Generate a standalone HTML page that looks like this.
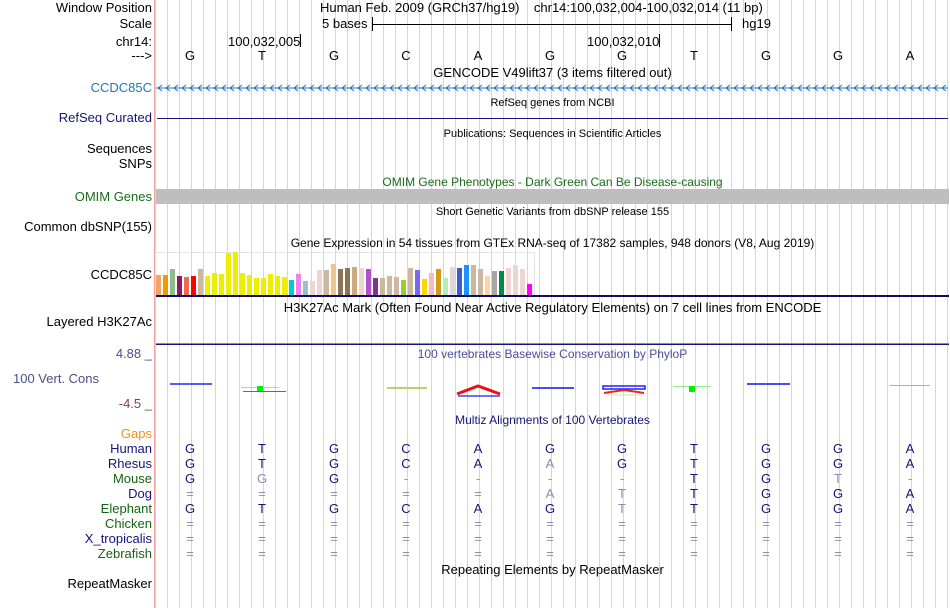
<!DOCTYPE html>
<html><head><meta charset="utf-8"><style>
body{margin:0;width:950px;height:608px;overflow:hidden;background:#fff;font-family:"Liberation Sans",sans-serif;font-size:13px;position:relative}
.a{position:absolute;white-space:nowrap;line-height:16px}
.l{position:absolute;right:798px;text-align:right;white-space:nowrap;line-height:16px}
.c{position:absolute;left:155px;width:795px;text-align:center;white-space:nowrap;line-height:16px}
.s{font-size:11px}
.row{position:absolute;left:154px;width:792px;display:flex;line-height:16px}
.row span{width:72px;text-align:center}
.g{color:#8c8cb4}
</style></head><body>
<div style="position:absolute;left:155px;top:0;width:795px;height:608px;background-image:linear-gradient(to right,#d2d2f2 1px,transparent 1px);background-size:12px 100%"></div>
<div style="position:absolute;left:154px;top:0;width:1px;height:608px;background:#f4a0a0"></div>

<div class="l" style="top:0">Window Position</div>
<div class="a" style="left:320px;top:0">Human Feb. 2009 (GRCh37/hg19) &nbsp;&nbsp; chr14:100,032,004-100,032,014 (11 bp)</div>
<div class="l" style="top:16px">Scale</div>
<div class="a" style="left:322px;top:16px">5 bases</div>
<div style="position:absolute;left:372px;top:24px;width:360px;height:1px;background:#000"></div>
<div style="position:absolute;left:372px;top:17px;width:1px;height:14px;background:#000"></div>
<div style="position:absolute;left:731px;top:17px;width:1px;height:14px;background:#000"></div>
<div class="a" style="left:742px;top:16px">hg19</div>
<div class="l" style="top:34px">chr14:</div>
<div class="a" style="left:228px;top:34px">100,032,005</div>
<div style="position:absolute;left:300px;top:34px;width:1px;height:13px;background:#000"></div>
<div class="a" style="left:587px;top:34px">100,032,010</div>
<div style="position:absolute;left:659px;top:34px;width:1px;height:13px;background:#000"></div>
<div class="l" style="top:48px">---&gt;</div>
<div class="row" style="top:48px"><span>G</span><span>T</span><span>G</span><span>C</span><span>A</span><span>G</span><span>G</span><span>T</span><span>G</span><span>G</span><span>A</span></div>

<div class="c" style="top:65px">GENCODE V49lift37 (3 items filtered out)</div>
<div class="l" style="top:80px;color:#1f77b4">CCDC85C</div>
<svg style="position:absolute;left:156px;top:83px" width="792" height="10"><defs><pattern id="ar" width="8" height="10" patternUnits="userSpaceOnUse"><path d="M6 2 L2 5 L6 8" stroke="#1f6fb4" fill="none" stroke-width="1"/></pattern></defs><line x1="0" y1="5" x2="792" y2="5" stroke="#1f6fb4"/><rect width="792" height="10" fill="url(#ar)"/></svg>

<div class="c s" style="top:95px">RefSeq genes from NCBI</div>
<div class="l" style="top:110px;color:#14147a">RefSeq Curated</div>
<div style="position:absolute;left:157px;top:118px;width:791px;height:1px;background:#14147a"></div>

<div class="c s" style="top:126px">Publications: Sequences in Scientific Articles</div>
<div class="l" style="top:141px">Sequences</div>
<div class="l" style="top:156px">SNPs</div>

<div class="c" style="top:174px;color:#1a6b1a;font-size:12px">OMIM Gene Phenotypes - Dark Green Can Be Disease-causing</div>
<div class="l" style="top:189px;color:#1a6b1a">OMIM Genes</div>
<div style="position:absolute;left:156px;top:189px;width:793px;height:15px;background:#bebebe"></div>

<div class="c s" style="top:204px">Short Genetic Variants from dbSNP release 155</div>
<div class="l" style="top:219px">Common dbSNP(155)</div>

<div class="c" style="top:235px;font-size:12px">Gene Expression in 54 tissues from GTEx RNA-seq of 17382 samples, 948 donors (V8, Aug 2019)</div>
<div class="l" style="top:267px">CCDC85C</div>
<div style="position:absolute;left:155px;top:252px;width:378px;height:43px;border:1px solid #e4e4e4;border-bottom:none"></div>
<svg id="bars" style="position:absolute;left:156px;top:250px" width="380" height="46"></svg>
<div style="position:absolute;left:156px;top:295px;width:793px;height:2px;background:#0d0d66"></div>

<div class="c" style="top:300px">H3K27Ac Mark (Often Found Near Active Regulatory Elements) on 7 cell lines from ENCODE</div>
<div class="l" style="top:314px">Layered H3K27Ac</div>
<div style="position:absolute;left:156px;top:343px;width:793px;height:1px;background:#c08040"></div>
<div style="position:absolute;left:156px;top:344px;width:793px;height:1px;background:#14147a"></div>

<div class="l" style="top:346px;color:#4d4d8a">4.88 _</div>
<div class="c" style="top:346px;color:#4d4d99;font-size:12px">100 vertebrates Basewise Conservation by PhyloP</div>
<div class="a" style="left:13px;top:371px;color:#4d4d8a">100 Vert. Cons</div>
<div class="l" style="top:396px;color:#8a4040">-4.5 _</div>

<div style="position:absolute;left:170px;top:383px;width:42px;height:2px;background:#5a5aee"></div>
<div style="position:absolute;left:241px;top:387px;width:38px;height:1px;background:#90ee90"></div>
<div style="position:absolute;left:257px;top:386px;width:6px;height:5px;background:#00ee00"></div>
<div style="position:absolute;left:243px;top:391px;width:43px;height:1px;background:#5a5aee"></div>
<div style="position:absolute;left:387px;top:387px;width:40px;height:2px;background:#c8c870"></div>
<div style="position:absolute;left:532px;top:387px;width:42px;height:2px;background:#4b4bee"></div>
<svg style="position:absolute;left:455px;top:384px" width="50" height="14"><path d="M2 10 L23 2 L45 10" stroke="#ee1010" stroke-width="3" fill="none"/><line x1="3" y1="12" x2="45" y2="12" stroke="#4040ee" stroke-width="1.5"/></svg>
<svg style="position:absolute;left:602px;top:385px" width="46" height="12"><rect x="1" y="1" width="42" height="3" fill="none" stroke="#2020ee" stroke-width="1.5"/><path d="M2 8 L22 5 L42 8" stroke="#ee2020" stroke-width="2" fill="none"/><line x1="4" y1="10" x2="40" y2="10" stroke="#c8e8a0"/></svg>
<div style="position:absolute;left:673px;top:386px;width:38px;height:1px;background:#90ee90"></div>
<div style="position:absolute;left:689px;top:386px;width:6px;height:6px;background:#00ee00"></div>
<div style="position:absolute;left:747px;top:383px;width:43px;height:2px;background:#4b4bee"></div>
<div style="position:absolute;left:890px;top:385px;width:40px;height:1px;background:#f09090"></div>

<div class="c" style="top:412px;color:#14147a;font-size:12px">Multiz Alignments of 100 Vertebrates</div>
<div class="l" style="top:426px;color:#ee9020">Gaps</div>
<div class="l" style="top:441px;color:#14147a">Human</div>
<div class="l" style="top:456px;color:#14147a">Rhesus</div>
<div class="l" style="top:471px;color:#146414">Mouse</div>
<div class="l" style="top:486px;color:#14147a">Dog</div>
<div class="l" style="top:501px;color:#146414">Elephant</div>
<div class="l" style="top:516px;color:#146414">Chicken</div>
<div class="l" style="top:531px;color:#14147a">X_tropicalis</div>
<div class="l" style="top:546px;color:#146414">Zebrafish</div>
<div style="color:#14147a">
<div class="row" style="top:441px"><span>G</span><span>T</span><span>G</span><span>C</span><span>A</span><span>G</span><span>G</span><span>T</span><span>G</span><span>G</span><span>A</span></div>
<div class="row" style="top:456px"><span>G</span><span>T</span><span>G</span><span>C</span><span>A</span><span class="g">A</span><span>G</span><span>T</span><span>G</span><span>G</span><span>A</span></div>
<div class="row" style="top:471px"><span>G</span><span class="g">G</span><span>G</span><span class="g">-</span><span class="g">-</span><span class="g">-</span><span class="g">-</span><span>T</span><span>G</span><span class="g">T</span><span class="g">-</span></div>
<div class="row g" style="top:486px"><span>=</span><span>=</span><span>=</span><span>=</span><span>=</span><span>A</span><span>T</span><span style="color:#14147a">T</span><span style="color:#14147a">G</span><span style="color:#14147a">G</span><span style="color:#14147a">A</span></div>
<div class="row" style="top:501px"><span>G</span><span>T</span><span>G</span><span>C</span><span>A</span><span>G</span><span class="g">T</span><span>T</span><span>G</span><span>G</span><span>A</span></div>
<div class="row g" style="top:516px"><span>=</span><span>=</span><span>=</span><span>=</span><span>=</span><span>=</span><span>=</span><span>=</span><span>=</span><span>=</span><span>=</span></div>
<div class="row g" style="top:531px"><span>=</span><span>=</span><span>=</span><span>=</span><span>=</span><span>=</span><span>=</span><span>=</span><span>=</span><span>=</span><span>=</span></div>
<div class="row g" style="top:546px"><span>=</span><span>=</span><span>=</span><span>=</span><span>=</span><span>=</span><span>=</span><span>=</span><span>=</span><span>=</span><span>=</span></div>
</div>
<div class="c" style="top:562px">Repeating Elements by RepeatMasker</div>
<div class="l" style="top:576px">RepeatMasker</div>

<script>
var tops=[105,105,87,108,111,108,87,108,99,102,39,36,99,105,114,114,102,108,111,120,102,123,123,90,90,72,87,84,81,84,87,114,114,108,111,120,84,90,117,99,87,114,81,84,75,75,87,108,93,93,84,75,87,132];
var cols=["#f4a460","#ee9a00","#8fbc8f","#8b1c62","#ee6a50","#ff0000","#cdb79e","#eeee00","#eeee00","#eeee00","#eeee00","#eeee00","#eeee00","#eeee00","#eeee00","#eeee00","#eeee00","#eeee00","#eeee00","#00cdcd","#ee82ee","#9ac0cd","#eed5d2","#eed5d2","#cdb79e","#eec591","#8b7355","#8b7355","#cdaa7d","#eed5d2","#b452cd","#7a378b","#cdb79e","#cdb79e","#cdb79e","#9acd32","#cdb79e","#7b68ee","#ffd700","#ffb6c1","#cd9b1d","#b4eeb4","#d9d9d9","#3a5fcd","#1e90ff","#cdb79e","#cdb79e","#ffd39b","#a6a6a6","#008b45","#eed5d2","#eed5d2","#eed5d2","#ff00ff"];
var s="";for(var i=0;i<54;i++){var t=240+tops[i]/3;var y=t-250;s+='<rect x="'+(i*7)+'" y="'+y+'" width="5" height="'+(295-t)+'" fill="'+cols[i]+'"/>';}
document.getElementById("bars").innerHTML=s;
</script>
</body></html>
